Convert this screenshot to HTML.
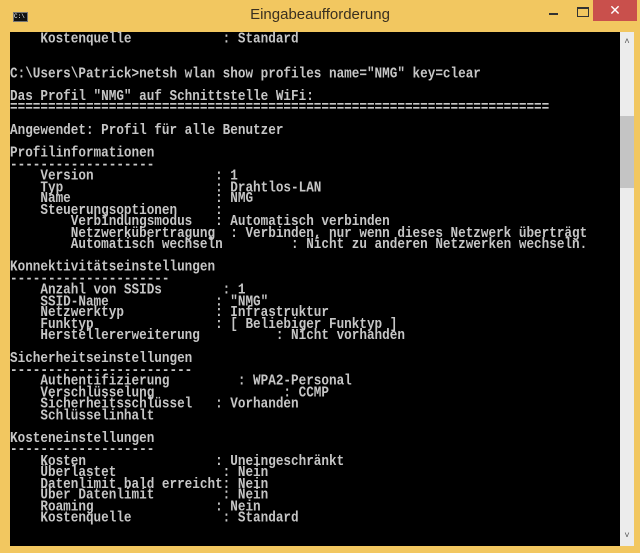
<!DOCTYPE html>
<html><head><meta charset="utf-8"><style>
html,body{margin:0;padding:0;}
body{width:640px;height:553px;background:#f2c760;position:relative;overflow:hidden;font-family:"Liberation Sans",sans-serif;}
.title{position:absolute;top:6px;left:0;width:640px;text-align:center;font-size:15px;color:#3a3020;}
.icon{position:absolute;left:13px;top:12px;width:15px;height:10px;background:#111;border:1px solid #777;box-sizing:border-box;color:#fff;font-size:6px;line-height:8px;font-family:"Liberation Mono",monospace;}
.min{position:absolute;left:549px;top:13px;width:9px;height:2px;background:#333;}
.max{position:absolute;left:577px;top:7px;width:10px;height:7px;border:1px solid #333;border-top-width:2px;}
.close{position:absolute;left:593px;top:0;width:44px;height:21px;background:#c9504c;color:#fff;text-align:center;font-size:14px;line-height:21px;}
.con{position:absolute;left:10px;top:32px;width:610px;height:514px;background:#000;}
pre{margin:0;position:absolute;left:10px;top:33px;font-family:"Liberation Mono",monospace;font-size:12.67px;line-height:9.5px;color:#c6c6c6;font-weight:bold;transform:scaleY(1.2);transform-origin:0 0;}
.sb{position:absolute;left:620px;top:32px;width:14px;height:514px;background:#ececec;}
.thumb{position:absolute;left:620px;top:116px;width:14px;height:72px;background:#c4c4c4;}
.arr{position:absolute;left:620px;width:14px;text-align:center;font-size:9px;color:#555;}
</style></head><body>
<div class="icon">C:\</div>
<div class="title">Eingabeaufforderung</div>
<div class="min"></div><div class="max"></div><div class="close">✕</div>
<div class="con"></div>
<div class="sb"></div><div class="thumb"></div>
<div class="arr" style="top:36px">˄</div><div class="arr" style="top:530px">˅</div>
<pre>    Kostenquelle            : Standard


C:\Users\Patrick>netsh wlan show profiles name="NMG" key=clear

Das Profil "NMG" auf Schnittstelle WiFi:
=======================================================================

Angewendet: Profil für alle Benutzer

Profilinformationen
-------------------
    Version                : 1
    Typ                    : Drahtlos-LAN
    Name                   : NMG
    Steuerungsoptionen     :
        Verbindungsmodus   : Automatisch verbinden
        Netzwerkübertragung  : Verbinden, nur wenn dieses Netzwerk überträgt
        Automatisch wechseln         : Nicht zu anderen Netzwerken wechseln.

Konnektivitätseinstellungen
---------------------
    Anzahl von SSIDs        : 1
    SSID-Name              : "NMG"
    Netzwerktyp            : Infrastruktur
    Funktyp                : [ Beliebiger Funktyp ]
    Herstellererweiterung          : Nicht vorhanden

Sicherheitseinstellungen
------------------------
    Authentifizierung         : WPA2-Personal
    Verschlüsselung                 : CCMP
    Sicherheitsschlüssel   : Vorhanden
    Schlüsselinhalt

Kosteneinstellungen
-------------------
    Kosten                 : Uneingeschränkt
    Überlastet              : Nein
    Datenlimit bald erreicht: Nein
    Über Datenlimit         : Nein
    Roaming                : Nein
    Kostenquelle            : Standard</pre>
</body></html>
